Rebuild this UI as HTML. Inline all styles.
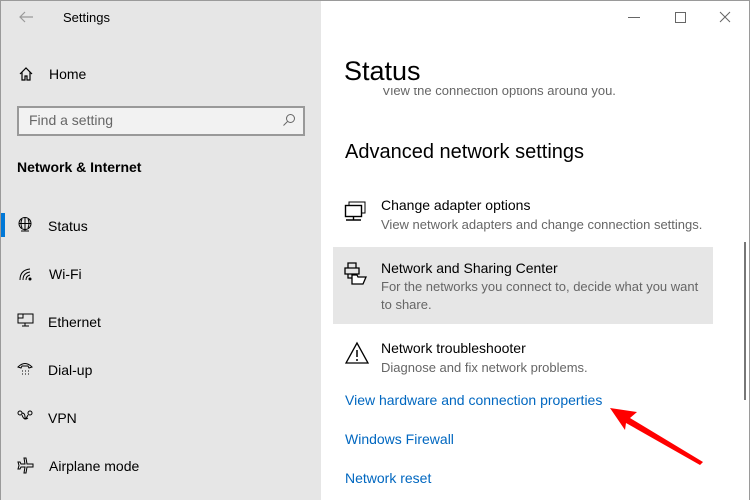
<!DOCTYPE html>
<html><head><style>
*{margin:0;padding:0;box-sizing:border-box}
body{width:750px;height:500px;overflow:hidden;font-family:"Liberation Sans",sans-serif;background:#fff;position:relative;color:#000}
.win{position:absolute;left:0;top:0;width:750px;height:500px;border:1px solid #9a9a9a;border-bottom:none}
.left{position:absolute;left:1px;top:1px;width:320px;height:499px;background:#e6e6e6}
.a{position:absolute;white-space:nowrap}
.t{font-size:14px}
.ic{position:absolute}
.d{font-size:13px;color:#666}
.lk{font-size:14px;color:#0067c0}
</style></head><body>
<div class="win"></div>
<div class="left"></div>
<svg class="ic" style="left:18px;top:10px" width="16" height="14"><path d="M15 7H2M7 2L2 7l5 5" stroke="#999" fill="none" stroke-width="1.2"/></svg>
<div class="a" style="left:63px;top:10px;font-size:13px">Settings</div>
<svg class="ic" style="left:18px;top:66px" width="16" height="16"><path d="M2 8L8 2l6 6M4 6v8h3v-4h2v4h3V6" stroke="#000" fill="none" stroke-width="1.2"/></svg>
<div class="a t" style="left:49px;top:66px">Home</div>
<div class="a" style="left:17px;top:106px;width:288px;height:30px;border:2px solid #999;background:#f2f2f2"></div>
<div class="a" style="left:29px;top:112px;font-size:14px;color:#666">Find a setting</div>
<svg class="ic" style="left:282px;top:113px" width="14" height="14"><circle cx="8.5" cy="5.5" r="4" stroke="#666" fill="none"/><path d="M5.5 8.5L1.5 12.5" stroke="#666"/></svg>
<div class="a" style="left:17px;top:159px;font-size:14px;font-weight:bold">Network &amp; Internet</div>
<div class="a" style="left:1px;top:213px;width:4px;height:24px;background:#0078d7"></div>
<svg class="ic" style="left:17px;top:217px" width="16" height="16"><circle cx="8" cy="6.5" r="6" stroke="#000" fill="none"/><path d="M2 6.5h12M8 .5v12M4 14h8M8 12v2M5 2q-2 4 0 9M11 2q2 4 0 9" stroke="#000" fill="none"/></svg>
<div class="a t" style="left:48px;top:218px">Status</div>
<svg class="ic" style="left:18px;top:266px" width="16" height="16"><path d="M2 14Q2 4 12 3M5 14Q5 7 12 6M8 14Q8 10 12 9" stroke="#000" fill="none"/><circle cx="12" cy="13" r="1.5"/></svg>
<div class="a t" style="left:49px;top:266px">Wi-Fi</div>
<svg class="ic" style="left:17px;top:313px" width="17" height="15"><rect x="1" y="1" width="15" height="9" stroke="#000" fill="none"/><path d="M8 10v3M5 13h7M1 5h5V1" stroke="#000" fill="none"/></svg>
<div class="a t" style="left:48px;top:314px">Ethernet</div>
<svg class="ic" style="left:17px;top:361px" width="16" height="16"><path d="M1 6Q8 -1 15 6l-3 1-1-2H5L4 7z" stroke="#000" fill="none"/><path d="M5 10h1M8 10h1M11 10h1M5 13h1M8 13h1M11 13h1" stroke="#000"/></svg>
<div class="a t" style="left:48px;top:362px">Dial-up</div>
<svg class="ic" style="left:17px;top:410px" width="16" height="12"><circle cx="3" cy="3" r="2" stroke="#000" fill="none"/><circle cx="13" cy="3" r="2" stroke="#000" fill="none"/><path d="M5 3q3 0 3 4t3-2M5 5q2 6 6 3" stroke="#000" fill="none"/></svg>
<div class="a t" style="left:48px;top:410px">VPN</div>
<svg class="ic" style="left:17px;top:457px" width="17" height="17"><path d="M7 1h2l1 6h6v3h-6l-1 6H7l1-6H4l-1 2H1l1-3.5L1 5h2l1 2h4z" stroke="#000" fill="none"/></svg>
<div class="a t" style="left:49px;top:458px">Airplane mode</div>

<svg class="ic" style="left:628px;top:11px" width="110" height="14"><path d="M0 6.5h12" stroke="#666"/><rect x="47.5" y="1.5" width="10" height="10" stroke="#666" fill="none"/><path d="M92 1l10 10M102 1L92 11" stroke="#666"/></svg>
<div class="a" style="left:344px;top:56px;font-size:27px">Status</div>
<div class="a" style="left:382px;top:88px;font-size:13px;color:#666;height:13px;overflow:hidden;line-height:13px"><span style="position:relative;top:-4px">View the connection options around you.</span></div>
<div class="a" style="left:345px;top:141px;font-size:20px">Advanced network settings</div>

<svg class="ic" style="left:344px;top:201px" width="24" height="22"><rect x="5" y="1" width="16" height="11" stroke="#000" fill="none"/><rect x="1.5" y="4.5" width="16" height="11" stroke="#000" fill="#fff" stroke-width="1.4"/><path d="M9.5 15.5v3M2 19h15" stroke="#000" stroke-width="1.4"/></svg>
<div class="a t" style="left:381px;top:197px">Change adapter options</div>
<div class="a d" style="left:381px;top:217px">View network adapters and change connection settings.</div>

<div class="a" style="left:333px;top:247px;width:380px;height:77px;background:#e6e6e6"></div>
<svg class="ic" style="left:344px;top:261px" width="24" height="24"><path d="M4 2h8v5H4zM1 7h14v6H1zM4 13v4h6" stroke="#000" fill="none" stroke-width="1.3"/><path d="M8 14h5l1 2h8l-3 7H8z" stroke="#000" fill="#fff" stroke-width="1.3"/></svg>
<div class="a t" style="left:381px;top:260px">Network and Sharing Center</div>
<div class="a d" style="left:381px;top:279px">For the networks you connect to, decide what you want</div>
<div class="a d" style="left:381px;top:297px">to share.</div>

<svg class="ic" style="left:345px;top:341px" width="24" height="24"><path d="M12 2L1 22h22z" stroke="#000" fill="none" stroke-width="1.3"/><path d="M12 9v7M12 18v2" stroke="#000" stroke-width="1.5"/></svg>
<div class="a t" style="left:381px;top:340px">Network troubleshooter</div>
<div class="a d" style="left:381px;top:360px">Diagnose and fix network problems.</div>

<div class="a lk" style="left:345px;top:392px">View hardware and connection properties</div>
<div class="a lk" style="left:345px;top:431px">Windows Firewall</div>
<div class="a lk" style="left:345px;top:470px">Network reset</div>

<div class="a" style="left:744px;top:242px;width:2px;height:158px;background:#777"></div>
<svg class="ic" style="left:0;top:0" width="750" height="500"><path d="M610 408L637 412L630 418L703 462L700 465L626 423L625 430Z" fill="#f00"/></svg>
</body></html>
